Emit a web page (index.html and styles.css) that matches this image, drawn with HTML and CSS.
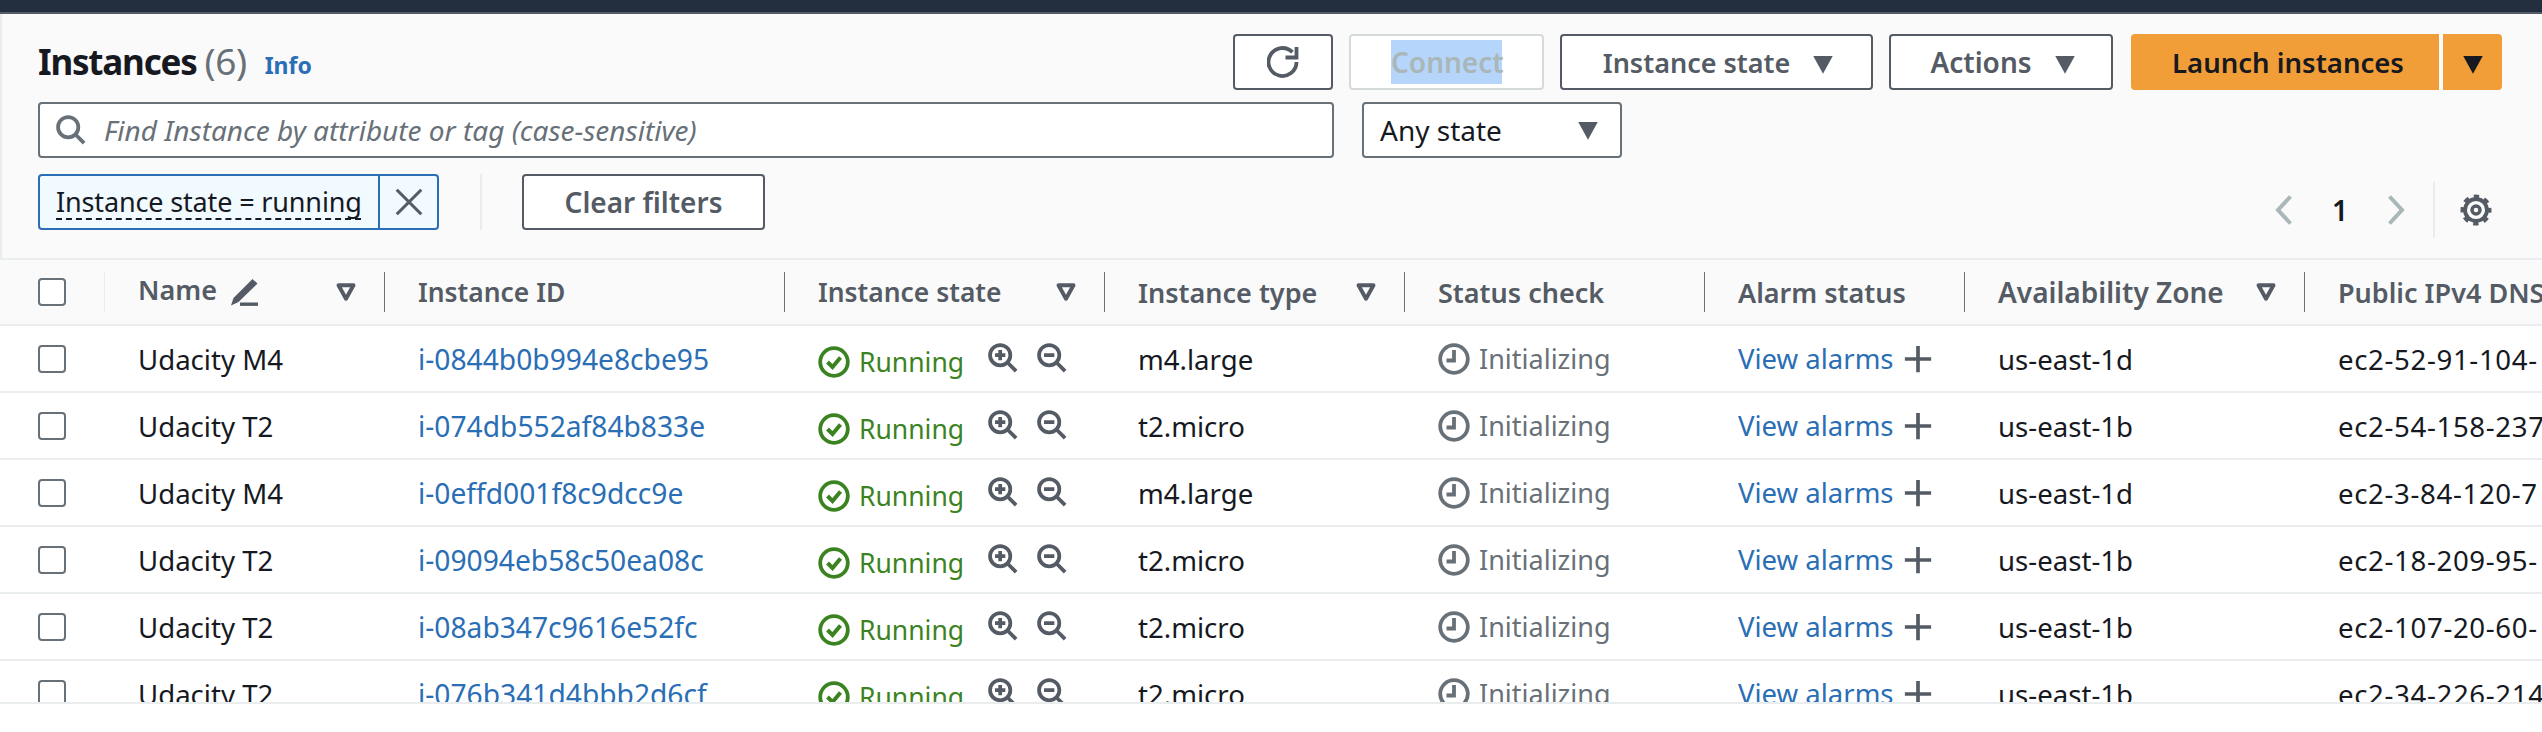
FILE: index.html
```html
<!DOCTYPE html>
<html lang="en">
<head>
    <meta charset="UTF-8">
    <title>Instances | EC2</title>
    <link rel="stylesheet" href="styles.css">
</head>
<body>
    <svg class="icon-defs" width="0" height="0" aria-hidden="true">
        <symbol id="i-caret" viewBox="0 0 16 16"><path d="M2 3h12l-6 11z" fill="currentColor"/></symbol>
        <symbol id="i-filter" viewBox="0 0 16 16"><path d="M3 3.5h10L8 12.5z" fill="none" stroke="currentColor" stroke-width="2.6" stroke-linejoin="round"/></symbol>
        <symbol id="i-check" viewBox="0 0 32 32"><circle cx="16" cy="16" r="13.8" fill="none" stroke="currentColor" stroke-width="3.8"/><path d="M9.5 16l5 5 8-9.5" fill="none" stroke="currentColor" stroke-width="4"/></symbol>
        <symbol id="i-zoomin" viewBox="0 0 32 32"><circle cx="13" cy="13" r="10.8" fill="none" stroke="currentColor" stroke-width="4"/><path d="M20.5 20.5l9.5 9.5M7.5 13h11M13 7.5v11" fill="none" stroke="currentColor" stroke-width="4"/></symbol>
        <symbol id="i-zoomout" viewBox="0 0 32 32"><circle cx="13" cy="13" r="10.8" fill="none" stroke="currentColor" stroke-width="4"/><path d="M20.5 20.5l9.5 9.5M7.5 13h11" fill="none" stroke="currentColor" stroke-width="4"/></symbol>
        <symbol id="i-clock" viewBox="0 0 32 32"><circle cx="16" cy="16" r="13.8" fill="none" stroke="currentColor" stroke-width="3.8"/><path d="M16 7v10.5H8.5" fill="none" stroke="currentColor" stroke-width="3.8"/></symbol>
        <symbol id="i-plus" viewBox="0 0 32 32"><path d="M16 1v30M1 16h30" fill="none" stroke="currentColor" stroke-width="4.2"/></symbol>
    </svg>

    <div class="top-bar"></div>

    <section class="panel">
        <header class="panel-head">
            <div class="head-row">
                <h1 class="title">Instances <span class="count">(6)</span></h1>
                <a class="info-link">Info</a>
                <div class="actions">
                    <button class="btn btn-icon">
                        <svg class="refresh" viewBox="0 0 32 32"><path d="M25.4 6.1A14 14 0 1 0 29.5 16" fill="none" stroke="currentColor" stroke-width="3.8"/><path d="M29.5 1v10.5h-11" fill="none" stroke="currentColor" stroke-width="3.8"/></svg>
                    </button>
                    <button class="btn btn-disabled"><span class="selected">Connect</span></button>
                    <button class="btn btn-state">Instance state<svg class="caret"><use href="#i-caret"/></svg></button>
                    <button class="btn btn-actions">Actions<svg class="caret"><use href="#i-caret"/></svg></button>
                    <div class="launch">
                        <button class="btn-launch">Launch instances</button>
                        <button class="btn-launch-more"><svg class="caret"><use href="#i-caret"/></svg></button>
                    </div>
                </div>
            </div>

            <div class="search-row">
                <div class="search-box">
                    <svg class="search-icon" viewBox="0 0 32 32"><circle cx="13" cy="13" r="10.8" fill="none" stroke="currentColor" stroke-width="4"/><path d="M20.5 20.5l9.5 9.5" fill="none" stroke="currentColor" stroke-width="4"/></svg>
                    <span class="placeholder">Find Instance by attribute or tag (case-sensitive)</span>
                </div>
                <div class="state-select">Any state <svg class="caret"><use href="#i-caret"/></svg></div>
            </div>

            <div class="filter-row">
                <div class="token">
                    <span class="token-label">Instance state = running</span>
                    <span class="token-close"><svg viewBox="0 0 32 32"><path d="M2 2l28 28M30 2L2 30" fill="none" stroke="currentColor" stroke-width="3.6"/></svg></span>
                </div>
                <span class="filter-sep"></span>
                <button class="btn btn-clear">Clear filters</button>
                <div class="pager">
                    <svg class="chevron" viewBox="0 0 18 30"><path d="M15.5 1.5L3 15l12.5 13.5" fill="none" stroke="currentColor" stroke-width="4"/></svg>
                    <span class="page-num">1</span>
                    <svg class="chevron" viewBox="0 0 18 30"><path d="M2.5 1.5L15 15 2.5 28.5" fill="none" stroke="currentColor" stroke-width="4"/></svg>
                    <span class="pager-sep"></span>
                    <svg class="gear" viewBox="0 0 32 32"><circle cx="16" cy="16" r="11" fill="none" stroke="currentColor" stroke-width="3.8"/><circle cx="16" cy="16" r="13.8" fill="none" stroke="currentColor" stroke-width="3.4" stroke-dasharray="5.42 5.42" stroke-dashoffset="2.7"/><circle cx="16" cy="16" r="4" fill="none" stroke="currentColor" stroke-width="3.4"/></svg>
                </div>
            </div>
        </header>

        <div class="table-wrap">
            <table class="instances">
                <thead>
                    <tr>
                        <th class="col-check"><span class="checkbox"></span><span class="th-sep th-sep-light"></span></th>
                        <th class="col-name"><span class="th-name">Name<svg class="pencil" viewBox="0 0 28 28"><path d="M22.5 1l5 4.5L8.5 24 1 27.5 3.5 20z" fill="currentColor"/><path d="M10 26.2h18" fill="none" stroke="currentColor" stroke-width="3.4"/></svg></span><svg class="filter"><use href="#i-filter"/></svg><span class="th-sep"></span></th>
                        <th class="col-id">Instance ID<span class="th-sep"></span></th>
                        <th class="col-state">Instance state<svg class="filter"><use href="#i-filter"/></svg><span class="th-sep"></span></th>
                        <th class="col-type">Instance type<svg class="filter"><use href="#i-filter"/></svg><span class="th-sep"></span></th>
                        <th class="col-status">Status check<span class="th-sep"></span></th>
                        <th class="col-alarm">Alarm status<span class="th-sep"></span></th>
                        <th class="col-zone">Availability Zone<svg class="filter"><use href="#i-filter"/></svg><span class="th-sep"></span></th>
                        <th class="col-dns">Public IPv4 DNS</th>
                    </tr>
                </thead>
                <tbody>
                    <tr>
                        <td><span class="checkbox"></span></td>
                        <td>Udacity M4</td>
                        <td><a class="link">i-0844b0b994e8cbe95</a></td>
                        <td><span class="state"><svg class="state-icon"><use href="#i-check"/></svg><span class="running">Running</span><svg class="zoom"><use href="#i-zoomin"/></svg><svg class="zoom"><use href="#i-zoomout"/></svg></span></td>
                        <td>m4.large</td>
                        <td><span class="status"><svg class="clock"><use href="#i-clock"/></svg>Initializing</span></td>
                        <td><span class="alarm"><a class="link">View alarms</a><svg class="plus"><use href="#i-plus"/></svg></span></td>
                        <td>us-east-1d</td>
                        <td>ec2-52-91-104-</td>
                    </tr>
                    <tr>
                        <td><span class="checkbox"></span></td>
                        <td>Udacity T2</td>
                        <td><a class="link">i-074db552af84b833e</a></td>
                        <td><span class="state"><svg class="state-icon"><use href="#i-check"/></svg><span class="running">Running</span><svg class="zoom"><use href="#i-zoomin"/></svg><svg class="zoom"><use href="#i-zoomout"/></svg></span></td>
                        <td>t2.micro</td>
                        <td><span class="status"><svg class="clock"><use href="#i-clock"/></svg>Initializing</span></td>
                        <td><span class="alarm"><a class="link">View alarms</a><svg class="plus"><use href="#i-plus"/></svg></span></td>
                        <td>us-east-1b</td>
                        <td>ec2-54-158-237</td>
                    </tr>
                    <tr>
                        <td><span class="checkbox"></span></td>
                        <td>Udacity M4</td>
                        <td><a class="link">i-0effd001f8c9dcc9e</a></td>
                        <td><span class="state"><svg class="state-icon"><use href="#i-check"/></svg><span class="running">Running</span><svg class="zoom"><use href="#i-zoomin"/></svg><svg class="zoom"><use href="#i-zoomout"/></svg></span></td>
                        <td>m4.large</td>
                        <td><span class="status"><svg class="clock"><use href="#i-clock"/></svg>Initializing</span></td>
                        <td><span class="alarm"><a class="link">View alarms</a><svg class="plus"><use href="#i-plus"/></svg></span></td>
                        <td>us-east-1d</td>
                        <td>ec2-3-84-120-7</td>
                    </tr>
                    <tr>
                        <td><span class="checkbox"></span></td>
                        <td>Udacity T2</td>
                        <td><a class="link">i-09094eb58c50ea08c</a></td>
                        <td><span class="state"><svg class="state-icon"><use href="#i-check"/></svg><span class="running">Running</span><svg class="zoom"><use href="#i-zoomin"/></svg><svg class="zoom"><use href="#i-zoomout"/></svg></span></td>
                        <td>t2.micro</td>
                        <td><span class="status"><svg class="clock"><use href="#i-clock"/></svg>Initializing</span></td>
                        <td><span class="alarm"><a class="link">View alarms</a><svg class="plus"><use href="#i-plus"/></svg></span></td>
                        <td>us-east-1b</td>
                        <td>ec2-18-209-95-</td>
                    </tr>
                    <tr>
                        <td><span class="checkbox"></span></td>
                        <td>Udacity T2</td>
                        <td><a class="link">i-08ab347c9616e52fc</a></td>
                        <td><span class="state"><svg class="state-icon"><use href="#i-check"/></svg><span class="running">Running</span><svg class="zoom"><use href="#i-zoomin"/></svg><svg class="zoom"><use href="#i-zoomout"/></svg></span></td>
                        <td>t2.micro</td>
                        <td><span class="status"><svg class="clock"><use href="#i-clock"/></svg>Initializing</span></td>
                        <td><span class="alarm"><a class="link">View alarms</a><svg class="plus"><use href="#i-plus"/></svg></span></td>
                        <td>us-east-1b</td>
                        <td>ec2-107-20-60-</td>
                    </tr>
                    <tr>
                        <td><span class="checkbox"></span></td>
                        <td>Udacity T2</td>
                        <td><a class="link">i-076b341d4bbb2d6cf</a></td>
                        <td><span class="state"><svg class="state-icon"><use href="#i-check"/></svg><span class="running">Running</span><svg class="zoom"><use href="#i-zoomin"/></svg><svg class="zoom"><use href="#i-zoomout"/></svg></span></td>
                        <td>t2.micro</td>
                        <td><span class="status"><svg class="clock"><use href="#i-clock"/></svg>Initializing</span></td>
                        <td><span class="alarm"><a class="link">View alarms</a><svg class="plus"><use href="#i-plus"/></svg></span></td>
                        <td>us-east-1b</td>
                        <td>ec2-34-226-214</td>
                    </tr>
                </tbody>
            </table>
        </div>
    </section>
</body>
</html>
```

FILE: styles.css
```css
body {
    margin: 0;
    width: 2542px;
    height: 732px;
    overflow: hidden;
    background-color: #fff;
    color: #16191f;
    font-family: "Noto Sans", "Open Sans", sans-serif;
    font-size: 28px;
}
.icon-defs {
    display: block;
    height: 0;
}
.top-bar {
    height: 12px;
    background-color: #232f3e;
    border-bottom: 2px solid #545b64;
}

/* header area */
.panel-head {
    background-color: #fafafa;
    padding: 20px 40px 0 38px;
    height: 244px;
    box-sizing: border-box;
    box-shadow: inset 2px 0 0 #eaeded;
}
.head-row {
    display: flex;
    align-items: center;
    height: 56px;
}
.title {
    margin: -2px 0 0;
    font-size: 35px;
    font-weight: 700;
    letter-spacing: -1.2px;
    line-height: 56px;
}
.count {
    font-size: 37px;
    font-weight: 400;
    letter-spacing: -0.4px;
    color: #687078;
}
.info-link {
    margin-left: 18px;
    margin-top: 6px;
    color: #2a6eb5;
    font-size: 23px;
    font-weight: 700;
}
.actions {
    display: flex;
    margin-left: auto;
    gap: 16px;
}
.btn {
    box-sizing: border-box;
    height: 56px;
    border: 2px solid #545b64;
    border-radius: 4px;
    background-color: #fff;
    color: #545b64;
    font: 600 28px "Noto Sans", "Open Sans", sans-serif;
    padding: 0;
}
.btn-icon {
    width: 100px;
    display: flex;
    align-items: center;
    justify-content: center;
}
.refresh {
    width: 32px;
    height: 32px;
    color: #545b64;
}
.btn-disabled {
    width: 195px;
    border-color: #d5dbdb;
    color: #aab7b8;
}
.selected {
    display: inline-block;
    width: 111px;
    line-height: 44px;
    background-color: #b5d5fb;
}
.btn-state {
    width: 313px;
    padding-left: 6px;
    font-size: 27px;
}
.btn-actions {
    width: 224px;
    padding-left: 6px;
}
.caret {
    width: 26px;
    height: 26px;
    margin-left: 20px;
    vertical-align: -4px;
}
.launch {
    display: flex;
    gap: 4px;
    margin-left: 2px;
}
.btn-launch,
.btn-launch-more {
    height: 56px;
    border: 0;
    background-color: #f29e38;
    color: #16191f;
    font: 600 27.5px "Noto Sans", "Open Sans", sans-serif;
    padding: 0;
}
.btn-launch {
    width: 308px;
    padding-left: 6px;
    border-radius: 4px 0 0 4px;
}
.btn-launch-more {
    width: 59px;
    border-radius: 0 4px 4px 0;
}
.btn-launch-more .caret {
    margin-left: 0;
}

.search-row {
    display: flex;
    gap: 28px;
    margin-top: 12px;
}
.search-box,
.state-select {
    box-sizing: border-box;
    height: 56px;
    display: flex;
    align-items: center;
    background-color: #fff;
    border: 2px solid #687078;
    border-radius: 4px;
}
.search-box {
    width: 1296px;
    padding-left: 16px;
    color: #687078;
}
.search-icon {
    width: 30px;
    height: 30px;
    margin-right: 18px;
}
.placeholder {
    font-style: italic;
}
.state-select {
    width: 260px;
    padding: 0 19px 0 16px;
    justify-content: space-between;
    color: #16191f;
}
.state-select .caret {
    color: #545b64;
}

.filter-row {
    display: flex;
    align-items: center;
    height: 56px;
    margin-top: 16px;
}
.token {
    box-sizing: border-box;
    width: 401px;
    height: 56px;
    display: flex;
    align-items: center;
    background-color: #f1faff;
    border: 2px solid #2a6eb5;
    border-radius: 4px;
}
.token-label {
    width: 338px;
    box-sizing: border-box;
    padding-left: 16px;
    font-size: 27px;
    letter-spacing: -0.15px;
    white-space: nowrap;
    line-height: 34px;
    text-decoration: underline dashed #16191f 2px;
    text-underline-offset: 6px;
}
.token-close {
    flex: 1;
    height: 52px;
    display: flex;
    align-items: center;
    justify-content: center;
    border-left: 2px solid #2a6eb5;
    color: #545b64;
}
.token-close svg {
    width: 28px;
    height: 28px;
}
.filter-sep {
    width: 2px;
    height: 56px;
    margin: 0 40px 0 41px;
    background-color: #eaeded;
}
.btn-clear {
    width: 243px;
}
.pager {
    display: flex;
    align-items: center;
    align-self: flex-start;
    margin: 8px 10px 0 auto;
    height: 56px;
}
.chevron {
    width: 18px;
    height: 30px;
    color: #aab7b8;
}
.page-num {
    width: 94px;
    text-align: center;
    font-weight: 600;
}
.pager-sep {
    width: 2px;
    height: 56px;
    margin: 0 25px 0 28px;
    background-color: #eaeded;
}
.gear {
    width: 32px;
    height: 32px;
    color: #545b64;
}

/* table */
.table-wrap {
    height: 446px;
    box-sizing: border-box;
    overflow: hidden;
    border-bottom: 2px solid #eaeded;
}
.instances {
    table-layout: fixed;
    width: 2640px;
    border-collapse: separate;
    border-spacing: 0;
}
.col-check { width: 105px; }
.col-name { width: 280px; }
.col-id { width: 400px; }
.col-state { width: 320px; }
.col-type { width: 300px; }
.col-status { width: 300px; }
.col-alarm { width: 260px; }
.col-zone { width: 340px; }
.instances th {
    position: relative;
    box-sizing: border-box;
    height: 68px;
    padding: 0 0 0 33px;
    background-color: #fafafa;
    border-top: 2px solid #eaeded;
    border-bottom: 2px solid #eaeded;
    color: #545b64;
    font-size: 27px;
    font-weight: 600;
    text-align: left;
    white-space: nowrap;
}
.instances th.col-zone {
    font-size: 28px;
}
.instances th.col-id,
.instances th.col-state {
    font-size: 26.4px;
}
.instances td {
    box-sizing: border-box;
    height: 67px;
    padding: 0 0 0 33px;
    border-bottom: 2px solid #eaeded;
    font-size: 27.6px;
    white-space: nowrap;
    overflow: hidden;
}
.instances td:last-child {
    letter-spacing: 0.65px;
}
.instances th:first-child,
.instances td:first-child {
    padding-left: 38px;
}
.th-sep {
    position: absolute;
    right: -1px;
    top: 12px;
    width: 2px;
    height: 40px;
    background-color: #687078;
}
.th-sep-light {
    background-color: #eaeded;
}
.th-name {
    position: relative;
    top: -3px;
}
.filter {
    position: absolute;
    right: 27px;
    top: 20px;
    width: 24px;
    height: 24px;
    color: #545b64;
}
.pencil {
    width: 28px;
    height: 28px;
    margin-left: 13px;
    vertical-align: -6px;
}
.checkbox {
    display: block;
    box-sizing: border-box;
    width: 28px;
    height: 28px;
    background-color: #fff;
    border: 2px solid #687078;
    border-radius: 4px;
}
.link {
    color: #2a6eb5;
    font-size: 28.2px;
}
.state,
.status,
.alarm {
    display: flex;
    align-items: center;
}
.state-icon,
.clock {
    width: 32px;
    height: 32px;
    margin-right: 9px;
}
.state-icon {
    color: #3b8321;
    position: relative;
    top: 3px;
}
.running {
    color: #3b8321;
    font-size: 26.5px;
    position: relative;
    top: 3px;
}
.zoom {
    width: 30px;
    height: 30px;
    margin-left: 19px;
    color: #545b64;
    position: relative;
    top: -1px;
}
.running + .zoom {
    margin-left: 24px;
}
.status {
    color: #687078;
    font-size: 27px;
}
.clock {
    color: #687078;
}
.alarm .link {
    font-size: 27.5px;
}
.plus {
    width: 28px;
    height: 28px;
    margin-left: 10px;
    color: #545b64;
}
```
